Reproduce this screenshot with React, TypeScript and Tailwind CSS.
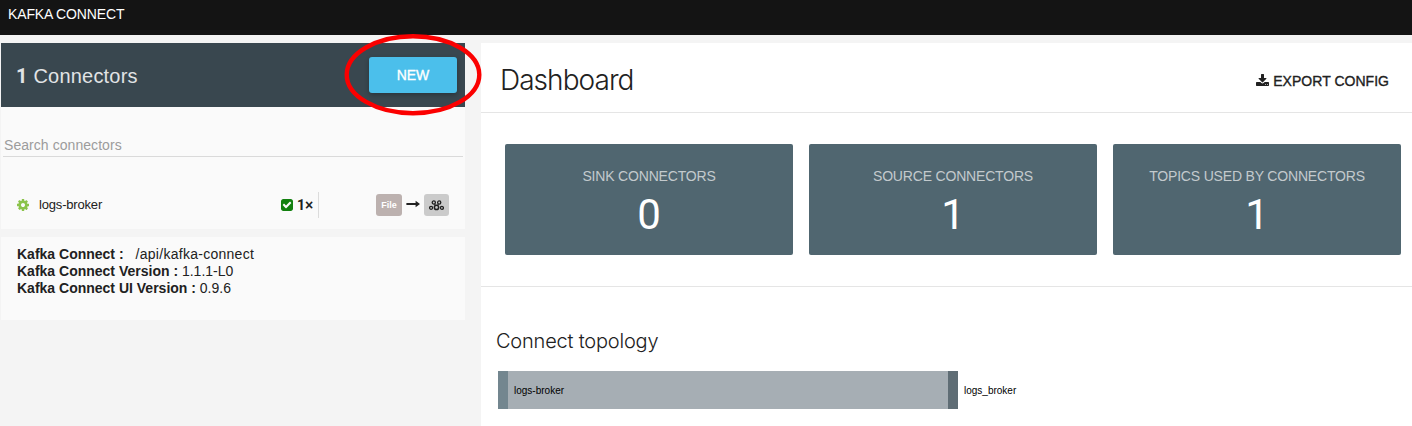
import React from "react";

type IconProps = { className?: string };

const CogIcon = ({ className }: IconProps) => (
  <svg viewBox="128 128 1536 1536" fill="currentColor" className={className}>
    <path d="M1152 896q0-106-75-181t-181-75-181 75-75 181 75 181 181 75 181-75 75-181zm512-109v222q0 12-8 23t-20 13l-185 28q-19 54-39 91 35 50 107 138 10 12 10 25t-9 23q-27 37-99 108t-94 71q-12 0-26-9l-138-108q-44 23-91 38-16 136-29 186-7 28-36 28h-222q-14 0-24.5-8.5t-11.5-21.5l-28-184q-49-16-90-37l-141 107q-10 9-25 9-14 0-25-11-126-114-165-168-7-10-7-23 0-12 8-23 15-21 51-66.5t54-70.5q-27-50-41-99l-183-27q-13-2-21-12.5t-8-23.5v-222q0-12 8-23t19-13l186-28q14-46 39-92-40-57-107-138-10-12-10-24 0-10 9-23 26-36 98.5-107.5t94.5-71.5q13 0 26 10l138 107q44-23 91-38 16-136 29-186 7-28 36-28h222q14 0 24.5 8.5t11.5 21.5l28 184q49 16 90 37l142-107q9-9 24-9 13 0 25 10 129 119 165 170 7 8 7 22 0 12-8 23-15 21-51 66.5t-54 70.5q26 50 41 98l183 28q13 2 21 12.5t8 23.5z" />
  </svg>
);

const CheckSquareIcon = ({ className }: IconProps) => (
  <svg viewBox="128 128 1536 1536" fill="currentColor" className={className}>
    <path d="M813 1299l614-614q19-19 19-45t-19-45l-102-102q-19-19-45-19t-45 19l-467 467-211-211q-19-19-45-19t-45 19l-102 102q-19 19-19 45t19 45l358 358q19 19 45 19t45-19zm851-883v960q0 119-84.5 203.5t-203.5 84.5h-960q-119 0-203.5-84.5t-84.5-203.5v-960q0-119 84.5-203.5t203.5-84.5h960q119 0 203.5 84.5t84.5 203.5z" />
  </svg>
);

const DownloadIcon = ({ className }: IconProps) => (
  <svg viewBox="0 0 1664 1536" fill="currentColor" className={className}>
    <path d="M1280 1344q0-26-19-45t-45-19-45 19-19 45 19 45 45 19 45-19 19-45zm256 0q0-26-19-45t-45-19-45 19-19 45 19 45 45 19 45-19 19-45zm128-224v320q0 40-28 68t-68 28h-1472q-40 0-68-28t-28-68v-320q0-40 28-68t68-28h465l135 136q58 56 136 56t136-56l136-136h464q40 0 68 28t28 68zm-325-569q17 41-14 70l-448 448q-18 19-45 19t-45-19l-448-448q-31-29-14-70 17-39 59-39h256v-448q0-26 19-45t45-19h256q26 0 45 19t19 45v448h256q42 0 59 39z" />
  </svg>
);

const ArrowIcon = ({ className }: IconProps) => (
  <svg viewBox="0 0 14 8" fill="currentColor" className={className}>
    <path d="M.4 2.9H9.6V.8L14 4 9.6 7.2V5H.4z" />
  </svg>
);

const TopicIcon = ({ className }: IconProps) => (
  <svg viewBox="0 0 15 11" fill="none" stroke="currentColor" strokeWidth="1.3" className={className}>
    <path d="M5.6 4.2 6.2 5M9.4 4.2 8.8 5" />
    <circle cx="4.8" cy="2.5" r="1.6" />
    <circle cx="10.2" cy="2.5" r="1.6" />
    <circle cx="2.1" cy="7.8" r="1.5" />
    <circle cx="12.9" cy="7.8" r="1.5" />
    <circle cx="7.5" cy="7.4" r="2.1" strokeWidth="1.5" />
  </svg>
);

const stats = [
  { label: "SINK CONNECTORS", value: 0 },
  { label: "SOURCE CONNECTORS", value: 1 },
  { label: "TOPICS USED BY CONNECTORS", value: 1 },
];

function Sidebar() {
  return (
    <aside className="ml-px w-[464px] shrink-0">
      <div className="relative flex h-16 items-center justify-between bg-[#39474f] pr-2 pl-4">
        <h2 className="pt-0.5 text-[20px] leading-6 tracking-[0.2px] text-[#e1e3e5]">
          <b className="-ml-px font-[Roboto,sans-serif]">1</b> Connectors
        </h2>
        <button className="h-9 w-22 rounded-[3px] bg-[#4bbfeb] text-[14px] font-medium text-white shadow-[0_2px_5px_rgba(0,0,0,0.26)] [-webkit-text-stroke:0.35px_white]">
          NEW
        </button>
        <svg viewBox="0 0 138 82" fill="none" className="pointer-events-none absolute top-[-9px] left-[343px] z-10 h-[82px] w-[138px]">
          <ellipse cx="69" cy="40.7" rx="66.3" ry="38.5" stroke="#fb0000" strokeWidth="4.4" />
        </svg>
      </div>
      <div className="h-[122px] bg-[#fafafa] pt-[29px]">
        <div className="mx-0.5 h-[21px] border-b border-[#dadada] pl-px text-[14px] leading-[19px] tracking-[0.06px] text-[#9c9c9c]">
          Search connectors
        </div>
        <div className="mt-[35px] flex h-[26px] items-center pl-4">
          <CogIcon className="size-3 text-[#8bc34a]" />
          <span className="ml-[10px] w-[242px] text-[13px] leading-4 tracking-[-0.18px] text-[#212121]">logs-broker</span>
          <CheckSquareIcon className="size-3 text-[#12800f]" />
          <span className="ml-1 w-[21px] text-[14px] font-bold text-[#212121]"><span className="font-[Roboto,sans-serif]">1</span>×</span>
          <span className="h-[26px] w-px bg-[#dcdcdc]" />
          <span className="ml-[57px] flex h-[22px] w-[26px] items-center justify-center rounded-[3px] bg-[#bcb1af] pt-px text-[9px] font-bold text-white">
            File
          </span>
          <ArrowIcon className="mb-[3px] ml-1 h-2 w-[14px] text-[#212121]" />
          <span className="ml-1 flex h-[22px] w-[25px] items-center justify-center rounded-[3px] bg-[#cbcbcb]">
            <TopicIcon className="h-[11px] w-[15px] text-[#212121]" />
          </span>
        </div>
      </div>
      <div className="mt-2 h-[83px] bg-[#fafafa] pt-[9px] pl-4 text-[14px] leading-[17px] text-[#212121]">
        <p><b>Kafka Connect :</b><span className="ml-3 tracking-[0.27px]">/api/kafka-connect</span></p>
        <p><b>Kafka Connect Version :</b> 1.1.1-L0</p>
        <p><b>Kafka Connect UI Version :</b> 0.9.6</p>
      </div>
    </aside>
  );
}

function Dashboard() {
  return (
    <main className="ml-4 flex-1 bg-white text-[#212121]">
      <header className="flex h-[70px] items-center justify-between border-b border-[#e5e5e5] pr-[23px] pl-[19px]">
        <h1 className="pt-[5px] font-[Inter,sans-serif] text-[28px] leading-9 font-light tracking-[-0.95px]">Dashboard</h1>
        <button className="flex items-center pt-[7px] text-[14px] leading-5 tracking-[0.03px] [-webkit-text-stroke:0.35px_#212121]">
          <DownloadIcon className="mr-1 mb-[3px] h-3 w-[13px]" />
          EXPORT CONFIG
        </button>
      </header>
      <section className="flex h-[174px] gap-4 border-b border-[#e5e5e5] pt-[31px] pl-6">
        {stats.map((s) => (
          <div key={s.label} className="h-[111px] w-72 shrink-0 rounded-[2px] bg-[#506670] pt-[22px] text-center">
            <div className="text-[14px] leading-5 tracking-[-0.18px] text-[#c3cacd]">{s.label}</div>
            <div className="pt-px font-[Roboto,sans-serif] text-[42px] leading-[56px] font-normal text-white">{s.value}</div>
          </div>
        ))}
      </section>
      <section className="pt-[40px] pl-[15px]">
        <h2 className="font-[Inter,sans-serif] text-[20px] leading-7 font-light tracking-[-0.2px]">Connect topology</h2>
        <div className="mt-4 ml-0.5 flex h-[38px] items-center text-[10px] text-black">
          <span className="h-full w-[10px] bg-[#73868f]" />
          <span className="flex h-full w-[440px] items-center bg-[#a6aeb4] pl-1.5">logs-broker</span>
          <span className="h-full w-[10px] bg-[#5f6d75]" />
          <span className="ml-1.5">logs_broker</span>
        </div>
      </section>
    </main>
  );
}

export default function App() {
  return (
    <div className="flex h-[426px] w-[1412px] flex-col overflow-hidden bg-[#f4f4f4] font-['Liberation_Sans',Arial,sans-serif]">
      <nav className="h-[35px] shrink-0 bg-[#141414] pt-1 pl-2 text-[14px] leading-5 tracking-[-0.15px] text-white">
        KAFKA CONNECT
      </nav>
      <div className="flex flex-1 pt-2">
        <Sidebar />
        <Dashboard />
      </div>
    </div>
  );
}
